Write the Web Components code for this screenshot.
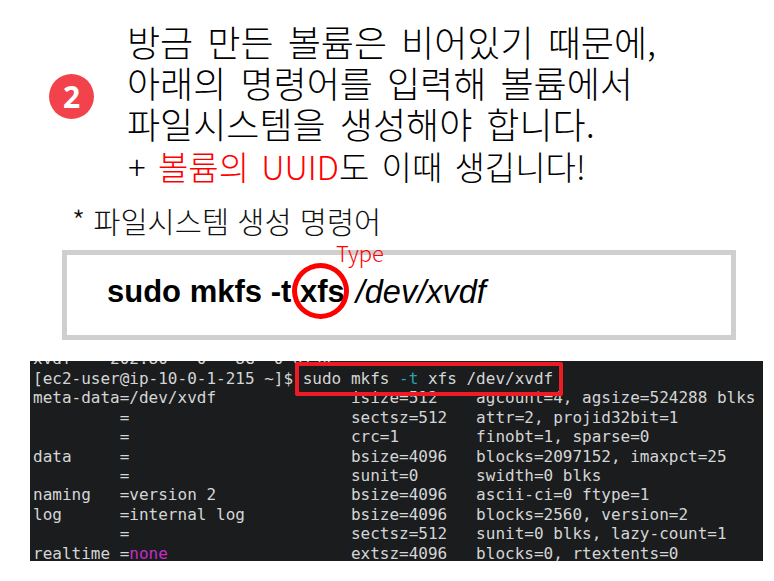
<!DOCTYPE html>
<html lang="ko">
<head>
<meta charset="utf-8">
<style>
  html, body { margin: 0; padding: 0; background: #fff; }
  body { width: 774px; height: 581px; overflow: hidden; }
</style>
</head>
<body>
<slide-page>
  <step-note number="2">
    <div>방금 만든 볼륨은 비어있기 때문에,</div>
    <div>아래의 명령어를 입력해 볼륨에서</div>
    <div>파일시스템을 생성해야 합니다.</div>
    <div slot="extra">+ <span style="color:#ff0000">볼륨의 UUID</span>도 이때 생깁니다!</div>
  </step-note>
  <command-box caption="* 파일시스템 생성 명령어" label="Type"></command-box>
  <term-window></term-window>
</slide-page>

<script>
const KR = `"Noto Sans CJK KR", "Noto Sans", sans-serif`;

class SlidePage extends HTMLElement {
  constructor() {
    super();
    this.attachShadow({ mode: "open" });
    this.shadowRoot.innerHTML = `
    <style>
    :host { display: flex; flex-direction: column; width: 774px; height: 581px; }
    </style>
    <slot></slot>`;
  }
}

class StepNote extends HTMLElement {
  constructor() {
    super();
    this.attachShadow({ mode: "open" });
    this.shadowRoot.innerHTML = `
    <style>
    :host { display: flex; align-items: flex-start; padding: 21px 0 0 49px; height: 178px; box-sizing: border-box;
      font-family: ${KR}; color: #000; }
    .badge { flex: none; width: 45px; height: 45px; margin-top: 53px; border-radius: 50%; background: #f2434d; color: #fff;
      display: flex; align-items: center; justify-content: center; font: 700 30px "Open Sans", sans-serif; }
    .text { margin-left: 33px; font-size: 36px; font-weight: 300; line-height: 41px; word-spacing: 4px; white-space: nowrap; }
    .extra { font-size: 33px; line-height: 40px; margin-top: 2px; padding-left: 1px; word-spacing: 3px; }
    </style>
    <div class="badge"></div>
    <div class="text">
      <slot></slot>
      <div class="extra"><slot name="extra"></slot></div>
    </div>`;
    this.shadowRoot.querySelector(".badge").textContent = this.getAttribute("number");
  }
}

class CommandBox extends HTMLElement {
  constructor() {
    super();
    this.attachShadow({ mode: "open" });
    this.shadowRoot.innerHTML = `
    <style>
    :host { display: block; position: relative; padding: 27px 0 0 62px; height: 183px; box-sizing: border-box; }
    .caption { font: 300 29.5px/30px ${KR}; color: #111; margin-left: 10px; white-space: nowrap; }
    .box { margin-top: 15px; width: 674px; height: 90px; box-sizing: border-box; border: 5px solid #d0cece; background: #fff;
      display: flex; align-items: center; padding: 0 0 6px 40px; color: #000; white-space: nowrap; font-family: "Liberation Sans", Arial, sans-serif; }
    b { font-size: 31px; }
    i { margin-left: 11px; font-size: 32.5px; }
    .ring { position: absolute; left: 292px; top: 85px; width: 57px; height: 56px; box-sizing: border-box; border: 5px solid #ff0000; border-radius: 50%; }
    .label { position: absolute; left: 336px; top: 60px; font: 300 22px/28px ${KR}; color: #ff0000; }
    </style>
    <div class="caption"></div>
    <div class="box"><b>sudo mkfs -t xfs</b><i>/dev/xvdf</i></div>
    <div class="ring"></div>
    <div class="label"></div>`;
    this.shadowRoot.querySelector(".caption").textContent = this.getAttribute("caption");
    this.shadowRoot.querySelector(".label").textContent = this.getAttribute("label");
  }
}

class TermWindow extends HTMLElement {
  constructor() {
    super();
    this.attachShadow({ mode: "open" });
    this.shadowRoot.innerHTML = `
    <style>
    :host { display: block; position: relative; margin: 0 0 0 30px; width: 733px; height: 200px; background: #1b1c1e; overflow: hidden; }
    pre { margin: -11.6px 0 0 3px; font: 16px/19.42px "DejaVu Sans Mono", monospace; color: #d4d6d6; }
    .t { color: #2aa1b3; }
    .m { color: #c22fc8; }
    .mark { position: absolute; left: 265px; top: 1px; width: 268px; height: 34px; box-sizing: border-box; border: 4.5px solid #ed1c24; border-radius: 2px; }
    </style>
    <pre>xvdf    202:80   0   8G  0 disk
[ec2-user@ip-10-0-1-215 ~]$ sudo mkfs <span class="t">-t</span> xfs /dev/xvdf
meta-data=/dev/xvdf              isize=512    agcount=4, agsize=524288 blks
         =                       sectsz=512   attr=2, projid32bit=1
         =                       crc=1        finobt=1, sparse=0
data     =                       bsize=4096   blocks=2097152, imaxpct=25
         =                       sunit=0      swidth=0 blks
naming   =version 2              bsize=4096   ascii-ci=0 ftype=1
log      =internal log           bsize=4096   blocks=2560, version=2
         =                       sectsz=512   sunit=0 blks, lazy-count=1
realtime =<span class="m">none</span>                   extsz=4096   blocks=0, rtextents=0</pre>
    <div class="mark"></div>`;
  }
}

customElements.define("slide-page", SlidePage);
customElements.define("step-note", StepNote);
customElements.define("command-box", CommandBox);
customElements.define("term-window", TermWindow);
</script>
</body>
</html>
